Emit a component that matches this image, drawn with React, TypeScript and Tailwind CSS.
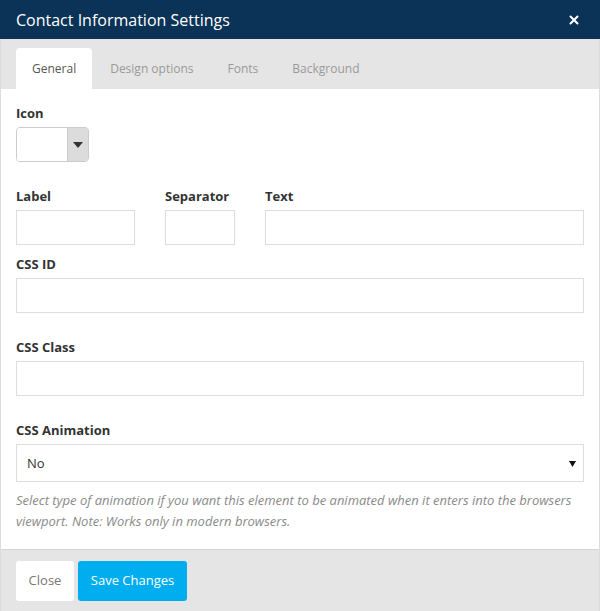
import { X } from 'lucide-react';

const tabs = ['General', 'Design options', 'Fonts', 'Background'];

const Label = ({ children }: { children: string }) => (
  <label className="block h-[18px] leading-[18px] text-[13px] font-bold text-[#333] mb-[5px]">{children}</label>
);

const TextInput = ({ className = '' }: { className?: string }) => (
  <input type="text" className={`block h-[35px] border border-[#ddd] bg-white outline-none ${className}`} />
);

export default function App() {
  return (
    <div className="w-[600px] h-[611px] flex flex-col bg-white font-['Open_Sans','Liberation_Sans',sans-serif]">
      <div className="h-[39px] shrink-0 bg-[#0a3357] flex items-center justify-between pl-4 pr-[19px]">
        <h2 className="text-white text-[16px] leading-none">Contact Information Settings</h2>
        <X className="w-[14px] h-[14px] text-white" strokeWidth={3.5} />
      </div>

      <div className="flex-1 flex flex-col border-x border-[#dcdcdc]">
        <div className="h-[50px] shrink-0 bg-[#e5e5e5] flex items-end gap-[2px] pl-[15px]">
          {tabs.map((t, i) => (
            <div
              key={t}
              className={`h-[41px] px-4 flex items-center text-[12px] rounded-t-[4px] ${i === 0 ? 'bg-white text-[#555]' : 'text-[#9a9a9a]'}`}
            >
              {t}
            </div>
          ))}
        </div>

        <div className="flex-1 px-[15px] pt-[15px]">
          <Label>Icon</Label>
          <div className="flex w-[73px] h-[35px] border border-[#ccc] rounded-[4px] overflow-hidden">
            <div className="flex-1 bg-white" />
            <div className="w-[21px] bg-[#dcdcdc] border-l border-[#ccc] flex items-center justify-center">
              <svg width="10" height="6" viewBox="0 0 10 6"><path d="M0 0h10L5 6z" fill="#333" /></svg>
            </div>
          </div>

          <div className="flex mt-[25px]">
            <div className="w-[119px]">
              <Label>Label</Label>
              <TextInput className="w-[119px]" />
            </div>
            <div className="w-[70px] ml-[30px]">
              <Label>Separator</Label>
              <TextInput className="w-[70px]" />
            </div>
            <div className="flex-1 ml-[30px]">
              <Label>Text</Label>
              <TextInput className="w-full" />
            </div>
          </div>

          <div className="mt-[10px]">
            <Label>CSS ID</Label>
            <TextInput className="w-full" />
          </div>

          <div className="mt-[25px]">
            <Label>CSS Class</Label>
            <TextInput className="w-full" />
          </div>

          <div className="mt-[25px]">
            <Label>CSS Animation</Label>
            <div className="h-[38px] border border-[#ddd] flex items-center justify-between pl-[10px] pr-[7px] pt-[1px] text-[13px] text-[#333]">
              <span>No</span>
              <svg width="7" height="7" viewBox="0 0 8 8"><path d="M0 1h8L4 8z" fill="#111" /></svg>
            </div>
            <p className="mt-[8px] text-[13px] leading-[21px] italic text-[#8a8a8a]">
              Select type of animation if you want this element to be animated when it enters into the browsers viewport. Note: Works only in modern browsers.
            </p>
          </div>
        </div>

        <div className="h-[62px] shrink-0 bg-[#e5e5e5] border-t border-[#d5d5d5] flex items-center gap-[4px] px-[15px]">
          <button className="h-[40px] w-[58px] bg-white rounded-[3px] text-[13px] text-[#777]">Close</button>
          <button className="h-[40px] w-[109px] bg-[#00aeef] rounded-[3px] text-[13px] text-white">Save Changes</button>
        </div>
      </div>
    </div>
  );
}
